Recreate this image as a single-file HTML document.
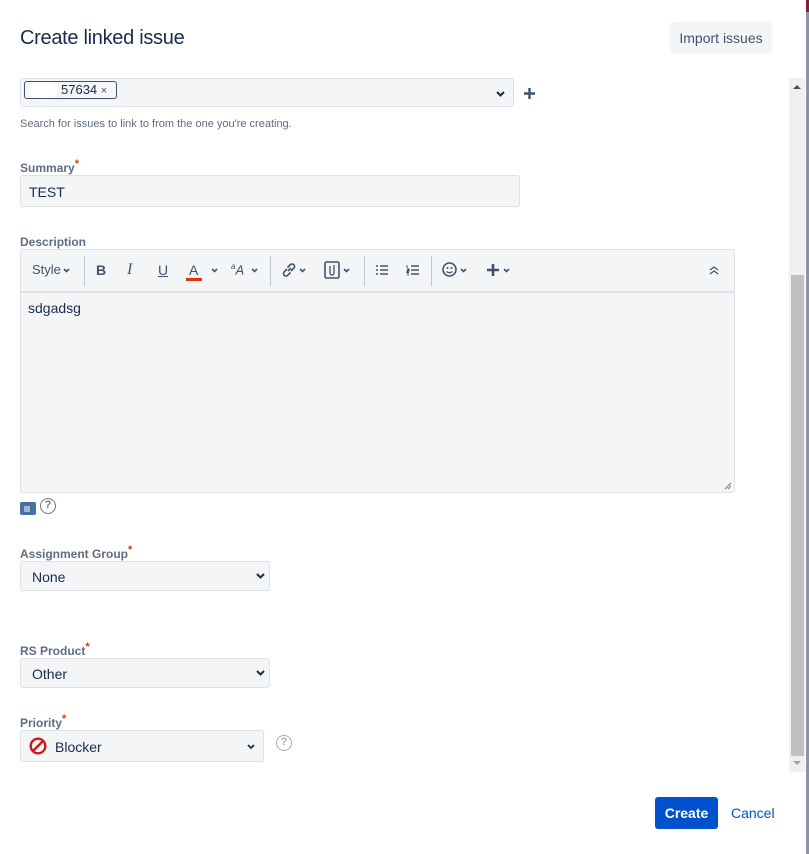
<!DOCTYPE html>
<html><head><style>
*{box-sizing:border-box;margin:0;padding:0}
body{width:809px;height:854px;background:#fff;font-family:"Liberation Sans",sans-serif;position:relative;overflow:hidden;color:#172b4d}
.a{position:absolute}
.lbl{font-size:12px;font-weight:bold;color:#5e6c84}
.req{color:#de350b;font-size:11px;vertical-align:top;position:relative;top:-3px}
.box{background:#f4f5f7;border:1px solid #dfe1e6;border-radius:3px}
.sel{font-size:14px;color:#172b4d}
.tb{position:absolute;top:262px;font-size:14px;color:#42526e}
.sep{position:absolute;top:256px;width:1px;height:30px;background:#c1c7d0}
svg.a{overflow:visible}
</style></head><body>
<div class="a" style="left:20px;top:27px;font-size:20px;color:#172b4d;letter-spacing:-0.3px">Create linked issue</div>
<div class="a" style="left:670px;top:22px;width:102px;height:32px;background:#f4f5f7;border-radius:3px;font-size:14px;color:#42526e;text-align:center;line-height:32px">Import issues</div>

<div class="a box" style="left:20px;top:78px;width:494px;height:29px"></div>
<div class="a" style="left:24px;top:81px;width:93px;height:18px;border:1px solid #42526e;border-radius:3px;background:#f4f5f7;font-size:13px;line-height:16px;padding-left:36px;color:#172b4d">57634 <span style="font-size:11px;color:#42526e">×</span></div>
<div class="a" style="left:28px;top:82px;width:30px;height:16px;background:#fff;border-radius:8px"></div>
<svg class="a" style="left:496px;top:91px" width="9" height="6"><path d="M1 1l3.5 3.5L8 1" fill="none" stroke="#172b4d" stroke-width="2"/></svg>
<svg class="a" style="left:524px;top:88px" width="11" height="11"><path d="M5.5 0v11M0 5.5h11" stroke="#42526e" stroke-width="2.4"/></svg>
<div class="a" style="left:20px;top:118px;font-size:11px;color:#5e6c84">Search for issues to link to from the one you're creating.</div>

<div class="a lbl" style="left:20px;top:161px">Summary<span class="req">*</span></div>
<div class="a box" style="left:20px;top:175px;width:500px;height:32px;padding:8px 8px;font-size:14px">TEST</div>

<div class="a lbl" style="left:20px;top:235px">Description</div>
<div class="a box" style="left:20px;top:249px;width:715px;height:244px"></div>
<div class="a" style="left:21px;top:291px;width:713px;height:2px;background:#dfe1e6"></div>
<div class="tb" style="left:32px;font-size:13px">Style</div>
<svg class="a" style="left:63px;top:268px" width="7" height="5"><path d="M1 1l2.5 2.5L6 1" fill="none" stroke="#42526e" stroke-width="1.6"/></svg>
<div class="sep" style="left:84px"></div>
<div class="tb" style="left:96px;font-weight:bold">B</div>
<div class="tb" style="left:127px;font-style:italic;font-family:'Liberation Serif',serif;font-size:16px;top:261px">I</div>
<div class="tb" style="left:158px;text-decoration:underline">U</div>
<div class="tb" style="left:189px">A</div>
<div class="a" style="left:186px;top:278px;width:16px;height:3px;background:#de350b"></div>
<svg class="a" style="left:211px;top:268px" width="7" height="5"><path d="M1 1l2.5 2.5L6 1" fill="none" stroke="#42526e" stroke-width="1.6"/></svg>
<div class="tb" style="left:231px;font-style:italic;font-size:13px"><sup style="font-size:8px">a</sup>A</div>
<svg class="a" style="left:251px;top:268px" width="7" height="5"><path d="M1 1l2.5 2.5L6 1" fill="none" stroke="#42526e" stroke-width="1.6"/></svg>
<div class="sep" style="left:270px"></div>
<svg class="a" style="left:281px;top:262px" width="16" height="16"><path d="M7 9l3-3M6 7l-3 3a2.5 2.5 0 003.5 3.5l3-3M10 9l3-3a2.5 2.5 0 00-3.5-3.5l-3 3" fill="none" stroke="#42526e" stroke-width="1.6"/></svg>
<svg class="a" style="left:299px;top:268px" width="7" height="5"><path d="M1 1l2.5 2.5L6 1" fill="none" stroke="#42526e" stroke-width="1.6"/></svg>
<svg class="a" style="left:324px;top:261px" width="16" height="18"><rect x="1" y="1" width="14" height="16" rx="1.5" fill="none" stroke="#42526e" stroke-width="1.6"/><path d="M6 5v7a2 2 0 004 0V4" fill="none" stroke="#42526e" stroke-width="1.3"/></svg>
<svg class="a" style="left:343px;top:268px" width="7" height="5"><path d="M1 1l2.5 2.5L6 1" fill="none" stroke="#42526e" stroke-width="1.6"/></svg>
<div class="sep" style="left:364px"></div>
<svg class="a" style="left:375px;top:264px" width="14" height="12"><path d="M1 2h2M1 6h2M1 10h2M5 2h8M5 6h8M5 10h8" stroke="#42526e" stroke-width="1.6"/></svg>
<svg class="a" style="left:406px;top:264px" width="14" height="12"><path d="M5 2h8M5 6h8M5 10h8" stroke="#42526e" stroke-width="1.4"/><path d="M1 1v3M1 5h2v2H1v2h2M1 11h2" stroke="#42526e" stroke-width="1"/></svg>
<div class="sep" style="left:431px"></div>
<svg class="a" style="left:442px;top:262px" width="15" height="15"><circle cx="7.5" cy="7.5" r="6.5" fill="none" stroke="#42526e" stroke-width="1.6"/><circle cx="5.5" cy="6" r="1" fill="#42526e"/><circle cx="9.5" cy="6" r="1" fill="#42526e"/><path d="M4.5 9.5q3 2.5 6 0" fill="none" stroke="#42526e" stroke-width="1.3"/></svg>
<svg class="a" style="left:460px;top:268px" width="7" height="5"><path d="M1 1l2.5 2.5L6 1" fill="none" stroke="#42526e" stroke-width="1.6"/></svg>
<svg class="a" style="left:487px;top:264px" width="12" height="12"><path d="M6 0v12M0 6h12" stroke="#42526e" stroke-width="2.6"/></svg>
<svg class="a" style="left:503px;top:268px" width="7" height="5"><path d="M1 1l2.5 2.5L6 1" fill="none" stroke="#42526e" stroke-width="1.6"/></svg>
<svg class="a" style="left:709px;top:266px" width="10" height="9"><path d="M1 4l4-3 4 3M1 8l4-3 4 3" fill="none" stroke="#42526e" stroke-width="1.3"/></svg>
<div class="a" style="left:28px;top:300px;font-size:14px">sdgadsg</div>
<svg class="a" style="left:724px;top:482px" width="8" height="8"><path d="M1 7l6-6M4 7l3-3" stroke="#777" stroke-width="1"/></svg>

<div class="a" style="left:20px;top:502px;width:16px;height:13px;background:#4a6fa5;border-radius:2px"></div>
<svg class="a" style="left:24px;top:506px" width="8" height="6"><path d="M0 1h6M0 3h6M0 5h6" stroke="#fff" stroke-width="1"/></svg>
<div class="a" style="left:40px;top:498px;width:16px;height:16px;border:1.5px solid #6b778c;border-radius:50%;font-size:11px;text-align:center;line-height:13px;color:#6b778c;font-weight:bold">?</div>

<div class="a lbl" style="left:20px;top:547px">Assignment Group<span class="req">*</span></div>
<div class="a box sel" style="left:20px;top:561px;width:250px;height:30px;padding:7px 11px">None</div>
<svg class="a" style="left:256px;top:573px" width="9" height="6"><path d="M1 1l3.5 3.5L8 1" fill="none" stroke="#172b4d" stroke-width="2"/></svg>

<div class="a lbl" style="left:20px;top:644px">RS Product<span class="req">*</span></div>
<div class="a box sel" style="left:20px;top:658px;width:250px;height:30px;padding:7px 11px">Other</div>
<svg class="a" style="left:256px;top:670px" width="9" height="6"><path d="M1 1l3.5 3.5L8 1" fill="none" stroke="#172b4d" stroke-width="2"/></svg>

<div class="a lbl" style="left:20px;top:716px">Priority<span class="req">*</span></div>
<div class="a box sel" style="left:20px;top:730px;width:244px;height:32px;padding:8px 0 0 34px">Blocker</div>
<svg class="a" style="left:29px;top:737px" width="18" height="18" viewBox="0 0 18 18"><circle cx="9" cy="9" r="7.3" fill="none" stroke="#d0191e" stroke-width="2.4"/><line x1="4" y1="14" x2="14" y2="4" stroke="#d0191e" stroke-width="2.4"/></svg>
<svg class="a" style="left:247px;top:744px" width="8" height="5"><path d="M1 1l3 3 3-3" fill="none" stroke="#172b4d" stroke-width="1.8"/></svg>
<div class="a" style="left:276px;top:735px;width:16px;height:16px;border:1.5px solid #a5adba;border-radius:50%;font-size:11px;text-align:center;line-height:13px;color:#a5adba;font-weight:bold">?</div>

<div class="a" style="left:655px;top:797px;width:63px;height:32px;background:#0052cc;border-radius:3px;color:#fff;font-weight:bold;font-size:14px;text-align:center;line-height:32px">Create</div>
<div class="a" style="left:731px;top:805px;font-size:14px;color:#0052cc">Cancel</div>

<div class="a" style="left:789px;top:78px;width:16px;height:694px;background:#f0f0f0"></div>
<div class="a" style="left:791px;top:275px;width:13px;height:481px;background:#c1c1c1"></div>
<div class="a" style="left:793px;top:85px;width:0;height:0;border-left:4px solid transparent;border-right:4px solid transparent;border-bottom:4px solid #505050"></div>
<div class="a" style="left:793px;top:761px;width:0;height:0;border-left:4px solid transparent;border-right:4px solid transparent;border-top:4px solid #a3a3a3"></div>
<div class="a" style="left:806px;top:0;width:3px;height:854px;background:#8a94a6"></div>
<div class="a" style="left:806px;top:0;width:3px;height:12px;background:#8c1c3c"></div>
</body></html>
